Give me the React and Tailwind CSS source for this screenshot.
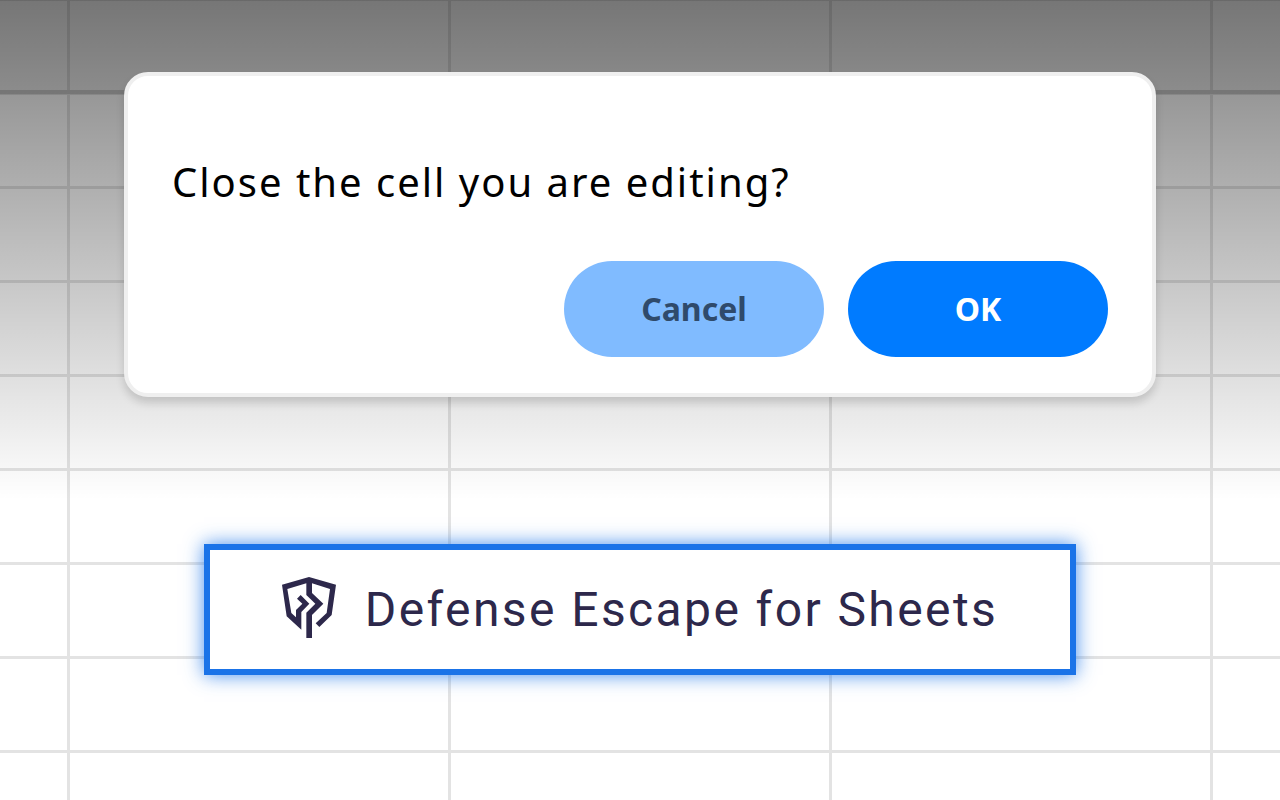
function ShieldIcon() {
  return (
    <svg
      viewBox="48 38 162 183"
      className="h-[61px] w-[54px] shrink-0"
      fill="currentColor"
      aria-hidden="true"
    >
      <path
        fillRule="evenodd"
        d="M129 38 L210 61 L197 152 L160 188 L149 177 L182 146 L192 74 L138 57 V86 L172 118 L138 152 V221 H121 V145 L148 118 L121 92 V57 L64 74 L76 146 L90 159 V137 L109 118 L93 103 L104 92 L130 118 L106 143 V196 L62 156 L48 61 Z"
      />
    </svg>
  );
}

export default function App() {
  return (
    <div className="min-h-screen bg-white bg-[linear-gradient(to_bottom,rgba(0,0,0,0.5),rgba(0,0,0,0)_500px),linear-gradient(#c8c8c8,#c8c8c8),linear-gradient(rgba(0,0,0,0.07),rgba(0,0,0,0.07)),linear-gradient(to_right,#e3e3e3_3px,transparent_3px),linear-gradient(to_bottom,#e3e3e3_3px,transparent_3px)] bg-size-[100%_100%,100%_4px,100%_90px,381px_100%,100%_94px] bg-position-[0_0,0_90px,0_0,67px_0,0_-2px] [background-repeat:no-repeat,no-repeat,no-repeat,repeat,repeat]">
      <main className="flex flex-col items-center px-6 pt-[72px] pb-24">
        <section
          role="dialog"
          aria-labelledby="dialog-title"
          className="w-full max-w-[1032px] rounded-3xl border-4 border-[#efefef] bg-white px-11 pt-[78px] pb-9 font-['Noto_Sans',sans-serif] shadow-[0_6px_8px_rgba(0,0,0,0.15)]"
        >
          <h1
            id="dialog-title"
            className="text-[40px] leading-[56px] font-normal tracking-wider text-black"
          >
            Close the cell you are editing?
          </h1>
          <div className="mt-[51px] flex flex-wrap justify-end gap-6">
            <button
              type="button"
              className="h-24 w-[260px] rounded-full bg-[#80bbff] text-[32px] leading-10 font-bold text-[#2f4a6b]"
            >
              Cancel
            </button>
            <button
              type="button"
              className="h-24 w-[260px] rounded-full bg-[#007bff] text-[32px] leading-10 font-bold text-white"
            >
              OK
            </button>
          </div>
        </section>
        <section className="mt-[147px] flex w-full max-w-[872px] items-start justify-center gap-[29px] border-6 border-[#1a73e8] bg-white pt-[27px] pb-[27px] text-[#2d284b] shadow-[0_0_18px_rgba(26,115,232,0.8)]">
          <ShieldIcon />
          <h2 className="font-['Roboto',sans-serif] text-5xl leading-[65px] font-normal tracking-wider">
            Defense Escape for Sheets
          </h2>
        </section>
      </main>
    </div>
  );
}
